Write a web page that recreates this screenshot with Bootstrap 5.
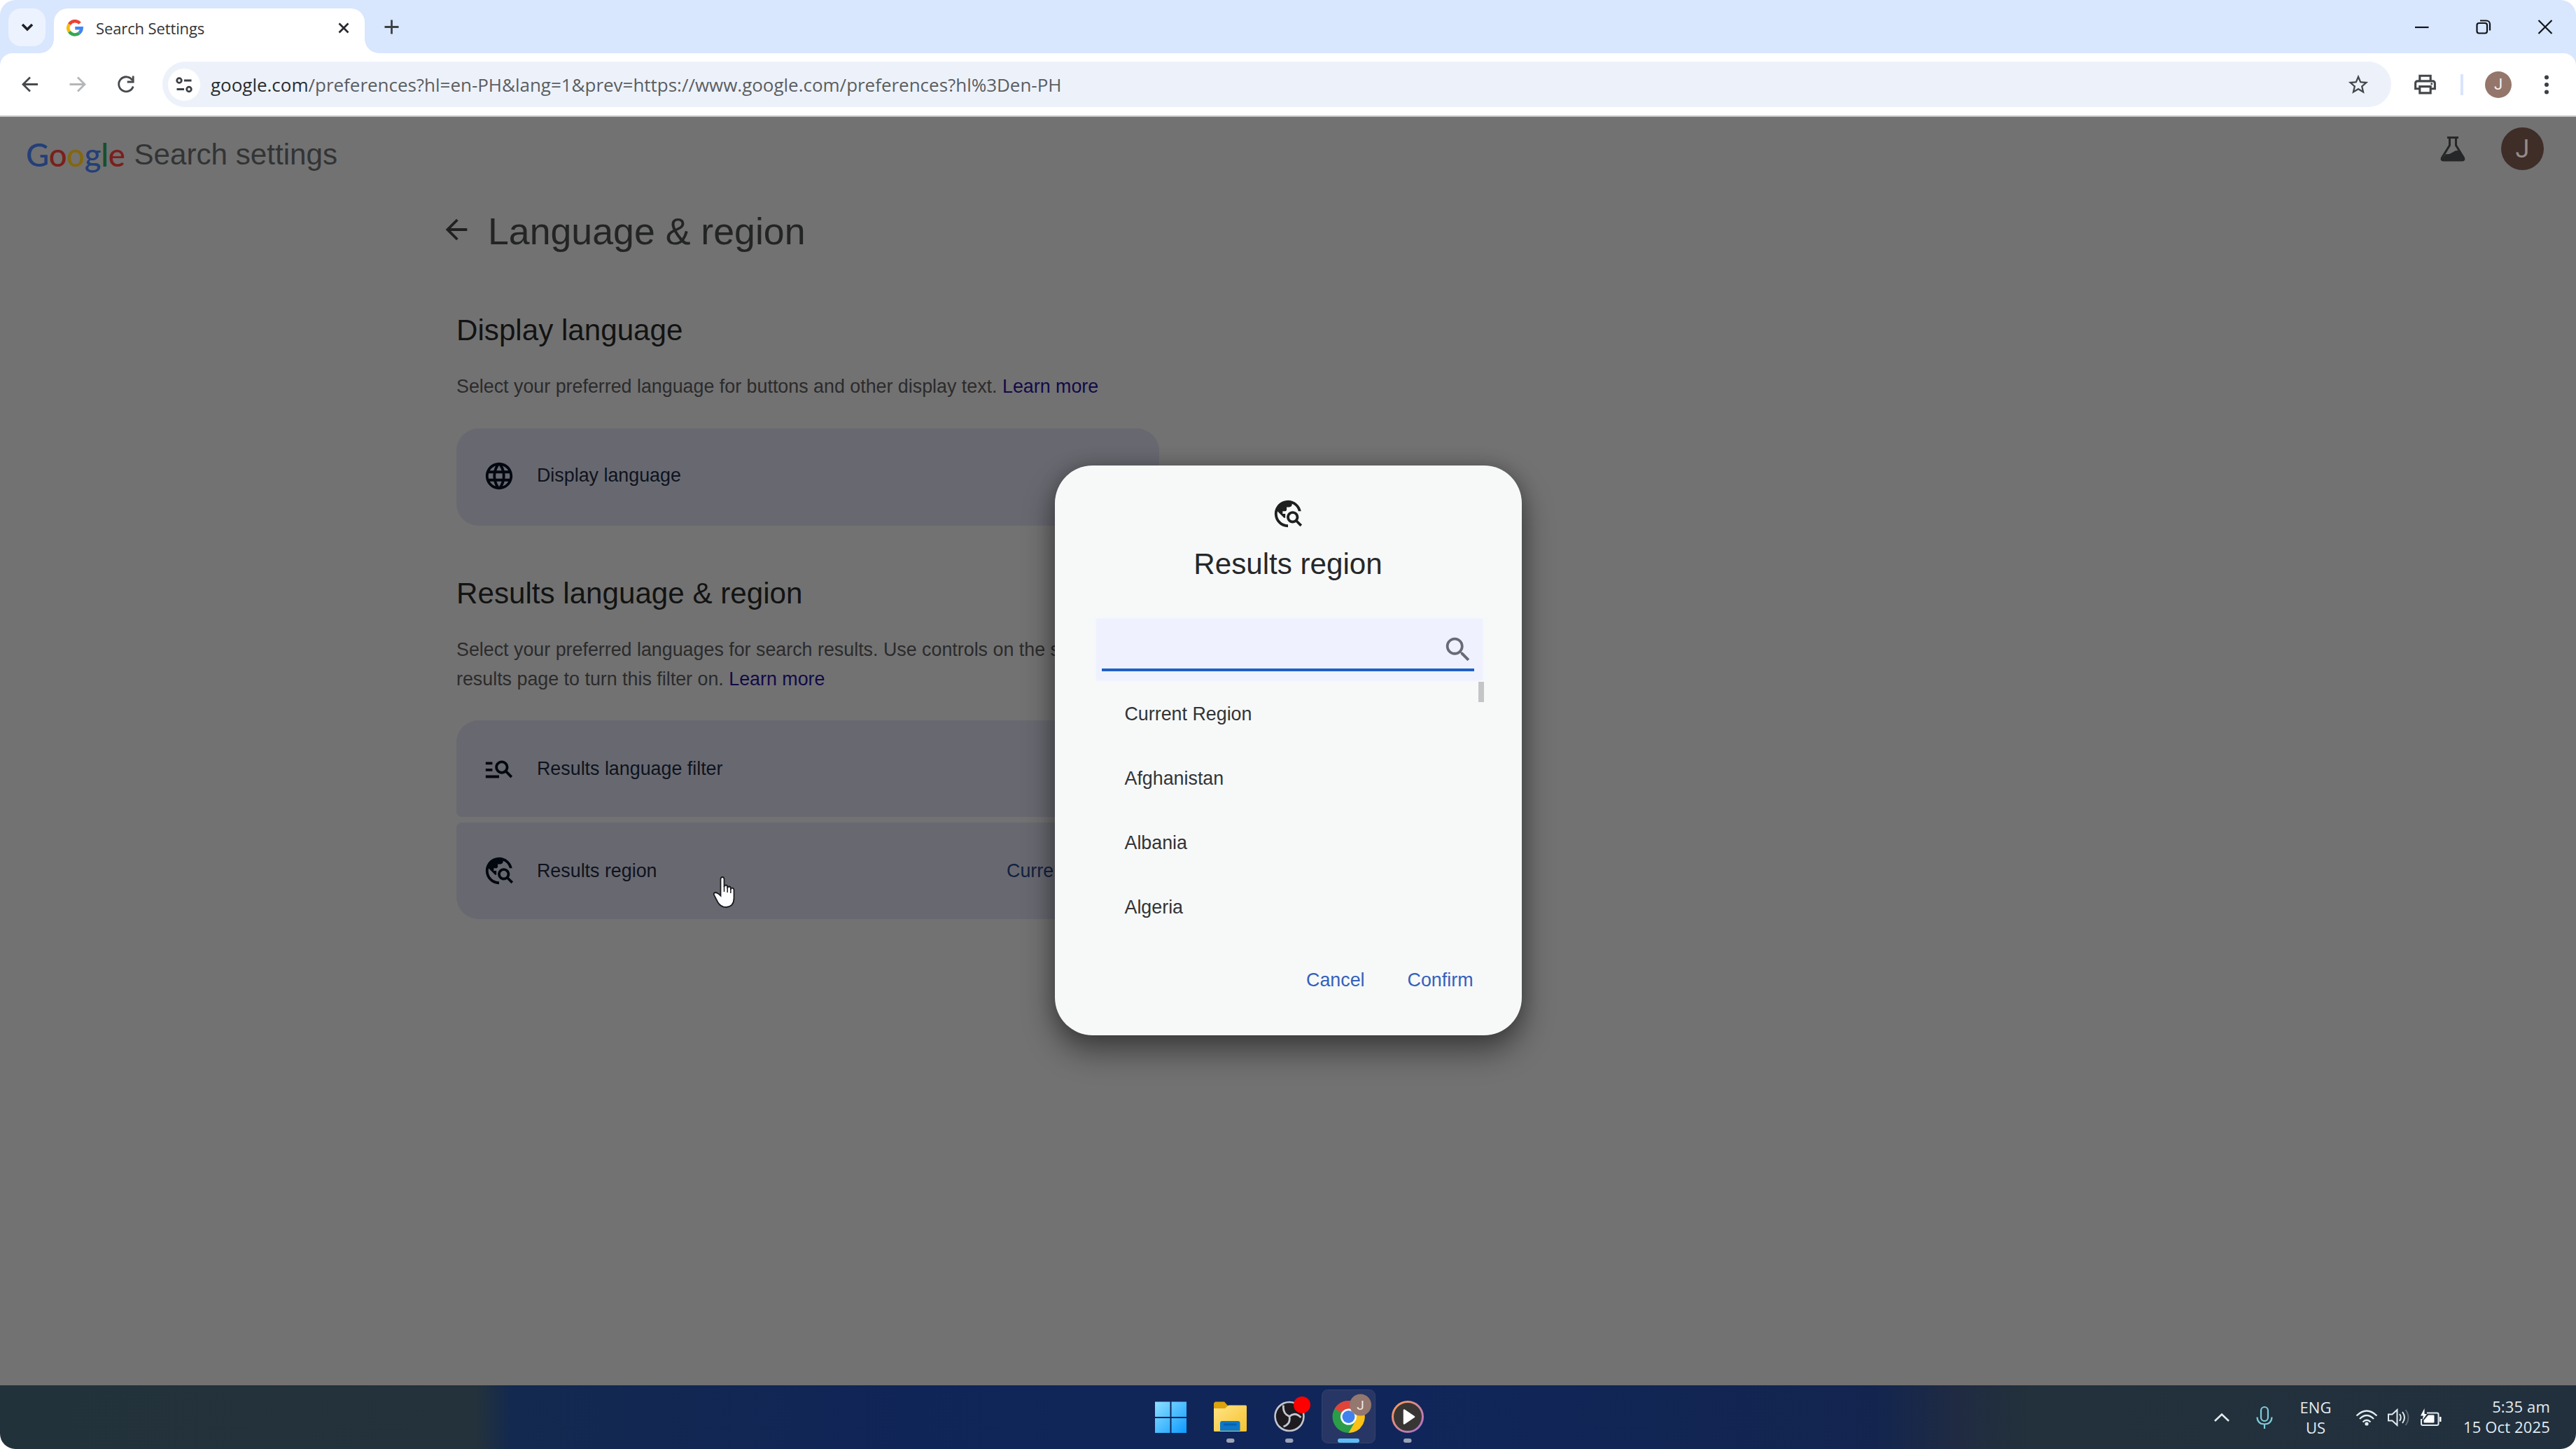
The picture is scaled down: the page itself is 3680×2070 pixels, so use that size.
<!DOCTYPE html>
<html lang="en">
<head>
    <meta charset="UTF-8">
    <title>Search Settings</title>
    <link href="https://cdn.jsdelivr.net/npm/bootstrap@5.3.0/dist/css/bootstrap.min.css" rel="stylesheet">
    <style>
        body { width: 3680px; height: 2070px; overflow: hidden; background: #fff; font-family: "Liberation Sans", Arial, sans-serif; }
        svg { display: block; flex-shrink: 0; }
        .desktop { height: 2070px; border-radius: 22px; overflow: hidden; }

        /* browser chrome */
        .tabstrip { height: 76px; background: #d8e6fe; padding-left: 12px; }
        .tab-search { width: 53px; height: 54px; margin-top: 12px; border-radius: 18px; background: #ecf3fe; }
        .tab-active { width: 444px; height: 64px; margin: 12px 0 0 12px; padding: 0 22px 9px 18px; border-radius: 20px 20px 0 0; background: #fff; }
        .tab-active::before, .tab-active::after { content: ""; position: absolute; bottom: 0; width: 20px; height: 20px; }
        .tab-active::before { left: -20px; background: radial-gradient(circle at 0 0, transparent 19.5px, #fff 20px); }
        .tab-active::after { right: -20px; background: radial-gradient(circle at 100% 0, transparent 19.5px, #fff 20px); }
        .tab-title { font: 22px "Open Sans", sans-serif; letter-spacing: -0.12px; color: #323438; margin-left: 18px; }
        .toolbar-wrap { background: #d8e6fe; height: 91px; }
        .toolbar { height: 91px; background: #fff; border-radius: 18px 18px 0 0; border-bottom: 2px solid #c4c4c4; padding: 12px 0 12px 22px; }
        .omnibox { width: 3184px; height: 65px; border-radius: 33px; background: #edf2fa; margin-left: 30px; padding-left: 8px; padding-right: 30px; }
        .site-info { width: 46px; height: 46px; background: #fff; }
        .url { font: 26px "Open Sans", sans-serif; letter-spacing: -0.02px; color: #5b5e62; margin-left: 15px; white-space: nowrap; }
        .url span { color: #2a2c2f; }
        .sep { width: 4px; height: 30px; background: #d9e4fb; }
        .avatar-sm { width: 38px; height: 38px; background: #94766b; color: #f6efec; font: 22px Roboto, sans-serif; }

        /* settings page, dimmed behind the dialog */
        .page { height: 1812px; background: #727272; }
        .page-head { height: 107px; padding: 0 46px 0 37px; }
        .brand { font: 500 45.5px/1 Lato, sans-serif; letter-spacing: -0.3px; }
        .brand-sub { font-size: 42.17px; line-height: 50px; color: #333435; margin-left: 13px; }
        .avatar-lg { width: 61px; height: 61px; background: #3f2d28; color: #948c89; font: 36px Roboto, sans-serif; margin-left: 50px; }
        .title-row { margin: 21px 0 0 629px; height: 70px; }
        .title-row h1 { font-size: 53.67px; font-weight: 400; line-height: 70px; color: #232424; margin: 0 0 0 22px; }
        .settings { width: 1004px; margin-left: 652px; }
        .settings h2 { font-size: 42.17px; font-weight: 400; line-height: 50px; color: #121313; margin: 0 0 34px; }
        .settings p { font-size: 26.83px; line-height: 42px; color: #2b2b2c; margin: 0; }
        .settings p a { color: #110a48; text-decoration: none; }
        .opt { height: 139px; background: #686970; padding-left: 38px; color: #0e131e; font-size: 26.83px; border-radius: 32px; }
        .opt svg { fill: #03070f; margin-right: 31px; }
        .opt-top { height: 138px; border-radius: 32px 32px 8px 8px; margin-top: 38px; }
        .opt-bottom { height: 138px; border-radius: 8px 8px 32px 32px; margin-top: 8px; }
        .opt-value { color: #13213f; margin-right: 36px; white-space: nowrap; }

        .overlay { inset: 0; padding-bottom: 2px; }
        .region-dialog { width: 667px; height: 814px; border-radius: 54px; background: #f7f9f9; padding-top: 46px; box-shadow: 0 22px 44px 2px rgba(0,0,0,.42), 0 0 26px rgba(0,0,0,.2); }
        .region-dialog h3 { font-size: 42.17px; font-weight: 400; line-height: 50px; color: #27282a; margin: 24px 0 53px; }
        .search-box { height: 88px; margin: 0 56px 0 59px; padding: 0 12px 14px 8px; background: #eff2fe; box-shadow: 0 0 6px #eff2fe; }
        .search-line { height: 75px; border-bottom: 4px solid #1f60c6; padding-top: 16px; }
        .region-list { margin: 2px 54px 0 100px; height: 368px; color: #333436; font-size: 26.83px; }
        .region-list li { height: 92px; line-height: 92px; }
        .thumb { width: 8px; height: 29px; background: #c3c5c6; }
        .dialog-actions { margin-top: 28px; height: 60px; padding-right: 69px; gap: 61px; font-size: 26.83px; }
        .dialog-actions a { color: #3461bd; text-decoration: none; }
        .pointer { left: 1017px; top: 1084px; }

        /* taskbar */
        .taskbar { height: 91px; background: linear-gradient(90deg, #22323a 0, #23323b 680px, #13294f 730px, #102557 1300px, #10265a 2000px, #13254f 2680px, #202b42 2800px, #22313b 2900px, #22303e 3680px); }
        .side { flex: 1 1 0; min-width: 0; }
        .apps { width: 424px; margin-left: 3px; }
        .tray { color: #e3ebf0; font: 22px/29px "Open Sans", sans-serif; }
        .lang { width: 50px; margin: 0 32px 0 35px; }
        .clock { width: 132px; margin: 0 37px 2px 22px; white-space: nowrap; letter-spacing: 0.15px; }
    </style>
</head>
<body>
<!-- shared icons -->
<svg width="0" height="0" class="position-absolute">
    <symbol id="travel" viewBox="0 0 24 24"><path d="M19.3 16.9c.4-.7.7-1.5.7-2.4 0-2.5-2-4.5-4.5-4.5S11 12 11 14.5s2 4.5 4.5 4.5c.9 0 1.700-.3 2.400-.7l3.200 3.200 1.400-1.400-3.200-3.200zm-3.800.1c-1.400 0-2.500-1.100-2.500-2.500s1.100-2.500 2.500-2.500 2.500 1.100 2.500 2.500-1.100 2.500-2.500 2.500zM12 20v2C6.480 22 2 17.520 2 12S6.480 2 12 2c4.840 0 8.870 3.440 9.800 8h-2.070c-.64-2.460-2.400-4.470-4.730-5.410V5c0 1.100-.9 2-2 2h-2v2c0 .55-.45 1-1 1H8v2h2v3H9l-4.790-4.790C4.080 10.790 4 11.380 4 12c0 4.410 3.590 8 8 8z"/></symbol>
    <symbol id="arrow" viewBox="0 0 24 24"><path d="M20 11H7.830l5.590-5.590L12 4l-8 8 8 8 1.410-1.410L7.830 13H20v-2z"/></symbol>
</svg>

<div class="desktop d-flex flex-column">
    <div class="tabstrip d-flex">
        <div class="tab-search d-flex align-items-center justify-content-center">
            <svg width="20" height="14" viewBox="0 0 20 14"><path d="M3 3l7 7 7-7" fill="none" stroke="#1f2124" stroke-width="3.600"/></svg>
        </div>
        <div class="tab-active position-relative d-flex align-items-center">
            <svg width="24" height="24" viewBox="0 0 24 24" fill="none" stroke-width="4.600">
                <path d="M19.200 5.300A9.600 9.600 0 0 0 4 6.700" stroke="#ea4335"/>
                <path d="M4 6.700A9.600 9.600 0 0 0 4 17.300" stroke="#fbbc05"/>
                <path d="M4 17.300A9.600 9.600 0 0 0 18.200 19.200" stroke="#34a853"/>
                <path d="M18.200 19.200A9.600 9.600 0 0 0 21.600 12.200H12.300" stroke="#4285f4"/>
            </svg>
            <span class="tab-title">Search Settings</span>
            <svg class="ms-auto" width="16" height="16" viewBox="0 0 16 16"><path d="M1.500 1.500l13 13M14.500 1.500l-13 13" stroke="#27292c" stroke-width="2.800"/></svg>
        </div>
        <svg width="22" height="76" viewBox="0 0 22 76" style="margin-left:27px"><path d="M11.500 28.500v20M1.500 38.500h20" stroke="#3c4043" stroke-width="2.800"/></svg>
        <svg class="ms-auto" width="240" height="76" viewBox="3440 0 240 76" fill="none" stroke="#101418" stroke-width="2.200">
            <path d="M3450 39h19.500"/>
            <rect x="3538.500" y="33" width="14.500" height="14.500" rx="3"/>
            <path d="M3543 29.500h9a5 5 0 0 1 5 5v9"/>
            <path d="M3626.500 29l19 19M3645.500 29l-19 19"/>
        </svg>
    </div>

    <div class="toolbar-wrap">
        <div class="toolbar d-flex align-items-center">
            <svg width="180" height="65" viewBox="22 88 180 65" fill="none" stroke="#474a4d" stroke-width="2.800">
                <path d="M54 120.500H33.500M43 110.500l-10 10 10 10"/>
                <path d="M99.500 120.500H120M111 110.500l10 10-10 10" stroke="#b4b6b8"/>
                <path d="M189 114.500a10.500 10.500 0 1 0 1.200 9"/>
                <path d="M190.200 108.500v8.500h-8.500" />
            </svg>
            <div class="omnibox d-flex align-items-center">
                <div class="site-info rounded-circle d-flex align-items-center justify-content-center">
                    <svg width="26" height="26" viewBox="0 0 26 26" fill="none" stroke="#3c4043" stroke-width="2.800">
                        <circle cx="6" cy="7" r="3.300"/><path d="M13 7h10.500M2.500 19.500H13"/><circle cx="20" cy="19.500" r="3.300"/>
                    </svg>
                </div>
                <div class="url"><span>google.com</span>/preferences?hl=en-PH&amp;lang=1&amp;prev=https://www.google.com/preferences?hl%3Den-PH</div>
                <svg class="ms-auto" width="34" height="34" viewBox="0 0 24 24"><path fill="#44474a" d="M22 9.240l-7.190-.62L12 2 9.190 8.630 2 9.240l5.460 4.730L5.820 21 12 17.270 18.180 21l-1.630-7.030L22 9.240zM12 15.400l-3.760 2.270 1-4.280-3.320-2.880 4.380-.38L12 6.100l1.710 4.040 4.380.38-3.320 2.880 1 4.280L12 15.400z"/></svg>
            </div>
            <svg width="37" height="37" viewBox="0 0 24 24" style="margin-left:30px"><path fill="#44474a" d="M19 8h-1V3H6v5H5c-1.660 0-3 1.340-3 3v6h4v4h12v-4h4v-6c0-1.660-1.340-3-3-3zM8 5h8v3H8V5zm8 12v2H8v-4h8v2zm2-2v-2H6v2H4v-4c0-.55.45-1 1-1h14c.55 0 1 .45 1 1v4h-2z"/><circle cx="18" cy="11.500" r="1" fill="#44474a"/></svg>
            <div class="sep" style="margin-left:32px"></div>
            <div class="avatar-sm rounded-circle d-flex align-items-center justify-content-center" style="margin-left:31px">J</div>
            <svg width="8" height="30" viewBox="0 0 8 30" fill="#3c4043" style="margin-left:46px"><circle cx="4" cy="4.500" r="3"/><circle cx="4" cy="15" r="3"/><circle cx="4" cy="25.500" r="3"/></svg>
        </div>
    </div>

    <div class="page position-relative">
        <div class="page-head d-flex align-items-center">
            <div class="brand"><span style="color:#243f78">G</span><span style="color:#7a201c">o</span><span style="color:#83670e">o</span><span style="color:#243f78">g</span><span style="color:#1a4f2b">l</span><span style="color:#7a201c">e</span></div>
            <div class="brand-sub">Search settings</div>
            <div class="ms-auto d-flex align-items-center pb-3">
                <svg width="38" height="38" viewBox="0 0 38 38">
                    <path d="M11 2.500h16M14.500 3v10.500L3.500 31.500q-1.500 3.500 2 3.500h27q3.500 0 2-3.500L23.500 13.500V3" fill="none" stroke="#262728" stroke-width="3"/>
                    <path d="M9 26q5 1 10-2.500t9-2l7 12-2 2.500H5l-2-2z" fill="#262728"/>
                </svg>
                <div class="avatar-lg rounded-circle d-flex align-items-center justify-content-center">J</div>
            </div>
        </div>

        <div class="title-row d-flex align-items-center">
            <svg width="46" height="46" fill="#1f2020" class="mb-1"><use href="#arrow"/></svg>
            <h1>Language &amp; region</h1>
        </div>

        <div class="settings" style="margin-top:82px">
            <h2>Display language</h2>
            <p>Select your preferred language for buttons and other display text. <a href="#">Learn more</a></p>
            <div class="opt d-flex align-items-center pb-1" style="margin-top:39px">
                <svg width="46" height="46" viewBox="0 0 24 24"><path d="M11.990 2C6.470 2 2 6.480 2 12s4.470 10 9.990 10C17.520 22 22 17.520 22 12S17.520 2 11.990 2zm6.930 6h-2.950c-.32-1.250-.78-2.450-1.380-3.560 1.840.63 3.370 1.910 4.330 3.560zM12 4.040c.83 1.200 1.480 2.530 1.910 3.960h-3.820c.43-1.430 1.080-2.760 1.910-3.960zM4.260 14C4.100 13.360 4 12.690 4 12s.1-1.360.26-2h3.380c-.08.66-.14 1.320-.14 2s.06 1.340.14 2H4.260zm.82 2h2.950c.32 1.250.78 2.450 1.380 3.560-1.840-.63-3.370-1.900-4.330-3.560zm2.950-8H5.080c.96-1.660 2.490-2.930 4.330-3.560C8.810 5.550 8.350 6.750 8.030 8zM12 19.960c-.83-1.200-1.480-2.530-1.910-3.960h3.820c-.43 1.430-1.080 2.760-1.910 3.960zM14.340 14H9.660c-.09-.66-.16-1.320-.16-2s.07-1.350.16-2h4.680c.09.65.16 1.320.16 2s-.07 1.340-.16 2zm.25 5.560c.6-1.110 1.060-2.310 1.380-3.560h2.950c-.96 1.650-2.490 2.930-4.330 3.560zM16.360 14c.08-.66.14-1.320.14-2s-.06-1.340-.14-2h3.380c.16.64.26 1.310.26 2s-.1 1.360-.26 2h-3.380z"/></svg>
                <span>Display language</span>
            </div>
        </div>

        <div class="settings" style="margin-top:72px">
            <h2>Results language &amp; region</h2>
            <p>Select your preferred languages for search results. Use controls on the search<br>results page to turn this filter on. <a href="#">Learn more</a></p>
            <div class="opt opt-top d-flex align-items-center">
                <svg width="46" height="46" viewBox="0 0 24 24"><path d="M7 9H2V7h5v2zm0 3H2v2h5v-2zm13.590 7l-3.830-3.830c-.8.52-1.740.83-2.760.83-2.760 0-5-2.240-5-5s2.240-5 5-5 5 2.240 5 5c0 1.020-.31 1.960-.83 2.750L22 17.590 20.590 19zM17 11c0-1.650-1.350-3-3-3s-3 1.350-3 3 1.350 3 3 3 3-1.350 3-3zM2 19h10v-2H2v2z"/></svg>
                <span>Results language filter</span>
            </div>
            <div class="opt opt-bottom d-flex align-items-center">
                <svg width="46" height="46"><use href="#travel"/></svg>
                <span class="text-nowrap">Results region</span>
                <span class="opt-value ms-auto">Current Region</span>
            </div>
        </div>

        <div class="overlay position-absolute d-flex align-items-center justify-content-center">
            <div class="region-dialog">
                <svg width="46" height="46" fill="#1e2020" class="mx-auto"><use href="#travel"/></svg>
                <h3 class="text-center">Results region</h3>
                <div class="search-box">
                    <div class="search-line d-flex align-items-center justify-content-end">
                        <svg width="46" height="46" viewBox="0 0 24 24"><path fill="#686b76" d="M15.500 14h-.79l-.28-.27C15.410 12.590 16 11.110 16 9.500 16 5.910 13.090 3 9.500 3S3 5.910 3 9.500 5.910 16 9.500 16c1.610 0 3.090-.59 4.230-1.570l.27.28v.79l5 4.990L20.490 19l-4.990-5zm-6 0C7.010 14 5 11.990 5 9.500S7.010 5 9.500 5 14 7.010 14 9.500 11.990 14 9.500 14z"/></svg>
                    </div>
                </div>
                <div class="region-list d-flex justify-content-between">
                    <ul class="list-unstyled mb-0">
                        <li>Current Region</li>
                        <li>Afghanistan</li>
                        <li>Albania</li>
                        <li>Algeria</li>
                    </ul>
                    <div class="thumb"></div>
                </div>
                <div class="dialog-actions d-flex align-items-center justify-content-end">
                    <a href="#">Cancel</a>
                    <a href="#">Confirm</a>
                </div>
            </div>
        </div>

        <svg class="pointer position-absolute" width="38" height="48" viewBox="0 0 38 48">
            <path d="M12.500 5q0-3 2.500-3t2.500 3v11q0-2.500 2.300-2.500t2.400 2.500v2q0-2.500 2.300-2.500t2.400 2.500v2q0-2.300 2.200-2.300t2.400 2.800V32q0 12-11 13-8 0-12-7L3 27.500q-1-3.500 2.500-3.500 3 .5 7 4.500z" fill="#fff" stroke="#1b1c20" stroke-width="1.800"/>
            <path d="M17.500 15v8M22.200 17v7M26.900 19v6" stroke="#1b1c20" stroke-width="1.500"/>
        </svg>
    </div>

    <div class="taskbar d-flex align-items-center">
        <div class="side"></div>
        <svg class="apps" height="91" viewBox="1630 1979 424 91">
            <defs>
                <linearGradient id="win" x1="0" y1="0" x2="1" y2="1"><stop offset="0" stop-color="#8fe0ff"/><stop offset="1" stop-color="#0c9bff"/></linearGradient>
                <linearGradient id="fold" x1="0" y1="0" x2="1" y2="1"><stop offset="0" stop-color="#ffe486"/><stop offset="1" stop-color="#f7c22e"/></linearGradient>
                <linearGradient id="ring" x1="0" y1="0" x2="1" y2="1"><stop offset="0" stop-color="#ff9c50"/><stop offset="1" stop-color="#a86fd8"/></linearGradient>
            </defs>
            <g fill="url(#win)">
                <path d="M1650 2002.500h21.500v21.500h-21.500zM1673.500 2002.500h21.500v21.500h-21.500zM1650 2026h21.500v21h-21.500zM1673.500 2026h21.500v21h-21.500z"/>
            </g>
            <!-- explorer -->
            <path d="M1736 2002.500h13l5 5.500h10v6h-30v-9.500z" fill="#dca30c"/>
            <path d="M1734 2012h16l5-4.500h24.500q1.500 0 1.500 1.500v34.500q0 1.500-1.500 1.500h-44q-1.500 0-1.500-1.500z" fill="url(#fold)"/>
            <path d="M1743 2044v-11q0-3 3-3h22.500q3 0 3 3v11z" fill="#0c77c8"/>
            <path d="M1748 2035h18.500" stroke="#0560ad" stroke-width="3"/>
            <!-- obs -->
            <circle cx="1842" cy="2023.500" r="20.500" fill="#1d1b1f" stroke="#c4c6cf" stroke-width="2.600"/>
            <g fill="none" stroke="#c4c6cf" stroke-width="2.800">
                <path d="M1842 2023.500q-10-4-8.500-16M1842 2023.500q8-7 16.500 1.500M1842 2023.500q2 11-8.500 14.500"/>
            </g>
            <circle cx="1860" cy="2007" r="12" fill="#f00"/>
            <!-- chrome -->
            <rect x="1888.500" y="1985.500" width="76" height="76" rx="8" fill="#273664" stroke="#34416c"/>
            <circle cx="1926.500" cy="2024" r="23" fill="#2b9d48"/>
            <path d="M1926.500 2024L1906.600 2012.500A23 23 0 0 1 1946.400 2012.500z" fill="#e0433a"/>
            <path d="M1926.500 2012.500h20A23 23 0 0 1 1926.500 2047l10-17.300z" fill="#fbc116"/>
            <circle cx="1926.500" cy="2024" r="11.500" fill="#fff"/>
            <circle cx="1926.500" cy="2024" r="9" fill="#3f82ef"/>
            <circle cx="1943.500" cy="2007" r="15.500" fill="#94776e"/>
            <text x="1943.500" y="2013.500" text-anchor="middle" font-family="Roboto, sans-serif" font-size="19" fill="#efe9e6">J</text>
            <!-- media player -->
            <circle cx="2011" cy="2024" r="21.500" fill="#383634" stroke="url(#ring)" stroke-width="3"/>
            <path d="M2006 2014.500l14 9.500-14 9.500z" fill="#fff" stroke="#fff" stroke-width="2.500" stroke-linejoin="round"/>
            <g fill="#9aa2b5">
                <rect x="1752" y="2055" width="11.500" height="6" rx="3"/>
                <rect x="1836" y="2055" width="11.500" height="6" rx="3"/>
                <rect x="2005" y="2055" width="11.500" height="6" rx="3"/>
            </g>
            <rect x="1911" y="2055" width="31" height="6" rx="3" fill="#5dbcf5"/>
        </svg>
        <div class="side tray d-flex align-items-center justify-content-end">
            <svg width="24" height="16" viewBox="0 0 24 16"><path d="M2 13l10-9.500L22 13" fill="none" stroke="#e3ebf0" stroke-width="2.600"/></svg>
            <svg width="26" height="34" viewBox="0 0 26 34" fill="none" stroke="#7fcbd9" stroke-width="2.200" style="margin-left:36px"><rect x="8" y="2" width="10" height="20" rx="5"/><path d="M2.500 16.500q.5 10 10.500 10t10.500-10M13 26.500V33"/></svg>
            <div class="lang text-center">ENG<br>US</div>
            <svg width="32" height="26" viewBox="0 0 32 26" fill="none" stroke="#e3ebf0" stroke-width="2.300"><path d="M1.500 10.500q14.500-14 29 0M6 15q10-10 20 0M10.500 19.500q5.500-5.500 11 0"/><circle cx="16" cy="22" r="2.600" fill="#e3ebf0" stroke="none"/></svg>
            <svg width="34" height="26" viewBox="0 0 34 26" fill="none" stroke="#e3ebf0" stroke-width="2" style="margin-left:13px"><path d="M2 8.500h5.500L14.500 2v22l-7-6.500H2z"/><path d="M18 8q3.500 5 0 10M22 5q6 8 0 16"/><path d="M26.500 2q8 11 0 22" stroke="#5c6972"/></svg>
            <svg width="32" height="26" viewBox="0 0 32 26" style="margin-left:13px"><path d="M10 6.500h14.500q2 0 2 2V22q0 2-2 2H4q-2 0-2-2V15" fill="none" stroke="#e3ebf0" stroke-width="2"/><path d="M28 12h2.500v7H28zM12 9.500h7.500q1 0 1 1v9q0 1-1 1h-13q-1 0-1-1V17z" fill="#fff"/><path d="M6.500 0L1 10.500h4L3.500 17 10 8H6.500z" fill="#fff"/></svg>
            <div class="clock text-end">5:35 am<br>15 Oct 2025</div>
        </div>
    </div>
</div>
<script src="https://cdn.jsdelivr.net/npm/bootstrap@5.3.0/dist/js/bootstrap.bundle.min.js"></script>
</body>
</html>
